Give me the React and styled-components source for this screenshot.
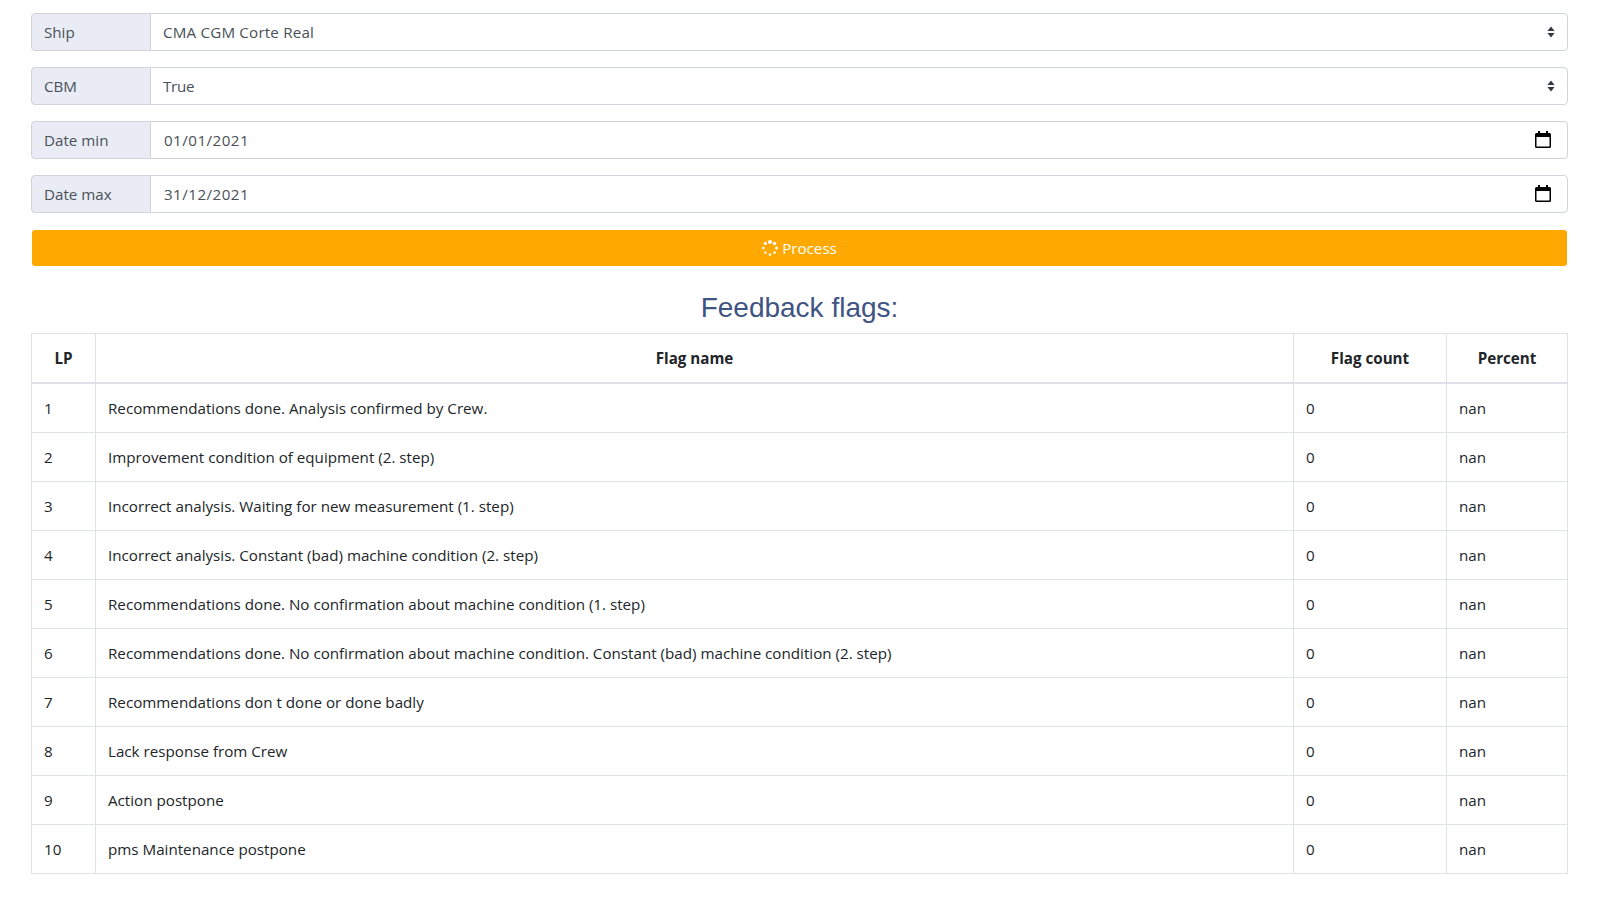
import styled, { createGlobalStyle } from "styled-components";

const GlobalStyle = createGlobalStyle`
  * {
    box-sizing: border-box;
  }
  body {
    margin: 0;
    background: #fff;
    color: #212529;
    font-family: "Open Sans", "Noto Sans", Arial, sans-serif;
    font-size: 15.18px;
    line-height: 24px;
  }
`;

const Page = styled.div`
  padding: 13px 43px 28px 31px;
  display: flex;
  flex-direction: column;
`;

const Field = styled.div`
  display: flex;
  height: 38px;
  margin-bottom: 16px;
`;

const FieldLabel = styled.div`
  width: 120px;
  padding: 0 12px;
  display: flex;
  align-items: center;
  color: #495057;
  background: #e9ecf5;
  border: 1px solid #ced4da;
  border-radius: 4px 0 0 4px;
`;

const FieldValue = styled.div`
  flex: 1;
  margin-left: -1px;
  padding: 0 11px 0 ${(p) => (p.$date ? "13px" : "12px")};
  display: flex;
  align-items: center;
  justify-content: space-between;
  color: #495057;
  border: 1px solid #ced4da;
  border-radius: 0 4px 4px 0;
  letter-spacing: ${(p) => p.$track || "0"};
`;

const ProcessButton = styled.button`
  height: 36px;
  margin: 1px 1px 0;
  border: none;
  border-radius: 3px;
  background: #ffa800;
  color: #fff;
  font: inherit;
  display: flex;
  align-items: center;
  justify-content: center;
  gap: 4px;
`;

const Heading = styled.h2`
  margin: 25px 0 8px;
  text-align: center;
  font-family: "Liberation Sans", Arial, sans-serif;
  font-size: 28px;
  font-weight: 400;
  line-height: 34px;
  color: #3f5482;
`;

const Table = styled.table`
  width: 100%;
  table-layout: fixed;
  border-collapse: collapse;
`;

const HeadCell = styled.th`
  height: 49px;
  padding: 12px 12px 11px;
  text-align: center;
  font-weight: 700;
  border: 1px solid #dee2e6;
  border-bottom-width: 2px;
`;

const Cell = styled.td`
  height: 49px;
  padding: 12px;
  border: 1px solid #dee2e6;
`;

const LpCol = styled.col`
  width: 64px;
`;

const CountCol = styled.col`
  width: 153px;
`;

const PercentCol = styled.col`
  width: 121px;
`;

const CalendarSvg = styled.svg`
  width: 16px;
  height: 17px;
  margin: 0 5px 2px 0;
`;

const flags = [
  "Recommendations done. Analysis confirmed by Crew.",
  "Improvement condition of equipment (2. step)",
  "Incorrect analysis. Waiting for new measurement (1. step)",
  "Incorrect analysis. Constant (bad) machine condition (2. step)",
  "Recommendations done. No confirmation about machine condition (1. step)",
  "Recommendations done. No confirmation about machine condition. Constant (bad) machine condition (2. step)",
  "Recommendations don t done or done badly",
  "Lack response from Crew",
  "Action postpone",
  "pms Maintenance postpone",
];

const SelectArrows = () => (
  <svg width="10" height="12" viewBox="0 0 10 12" fill="#343a40">
    <path d="M5 0.5 8.6 5H1.4zM5 11.5 1.4 7h7.2z" />
  </svg>
);

const CalendarIcon = () => (
  <CalendarSvg viewBox="0 0 16 17">
    <path fill="#000" d="M3 0h2v2h6V0h2v2h1.500A1.500 1.500 0 0 1 16 3.500v12a1.500 1.500 0 0 1-1.500 1.500h-13A1.500 1.500 0 0 1 0 15.500v-12A1.500 1.500 0 0 1 1.500 2H3zM1.500 6v9.500h13V6z" />
  </CalendarSvg>
);

const Spinner = () => (
  <svg width="16" height="16" viewBox="0 0 16 16" fill="#fff">
    <circle cx="8" cy="2" r="2" />
    <circle cx="12.500" cy="3.500" r="1.700" />
    <circle cx="14.500" cy="8" r="1.500" />
    <circle cx="12.600" cy="12.600" r="1.300" />
    <circle cx="8" cy="14.600" r="1.300" />
    <circle cx="3.400" cy="12.600" r="1.200" />
    <circle cx="1.400" cy="8" r="1.200" />
    <circle cx="3.400" cy="3.400" r="1.600" />
  </svg>
);

export default function App() {
  return (
    <Page>
      <GlobalStyle />
      <Field>
        <FieldLabel>Ship</FieldLabel>
        <FieldValue $track="0.18px">
          CMA CGM Corte Real
          <SelectArrows />
        </FieldValue>
      </Field>
      <Field>
        <FieldLabel>CBM</FieldLabel>
        <FieldValue $track="-0.3px">
          True
          <SelectArrows />
        </FieldValue>
      </Field>
      <Field>
        <FieldLabel>Date min</FieldLabel>
        <FieldValue $date $track="0.45px">
          01/01/2021
          <CalendarIcon />
        </FieldValue>
      </Field>
      <Field>
        <FieldLabel>Date max</FieldLabel>
        <FieldValue $date $track="0.45px">
          31/12/2021
          <CalendarIcon />
        </FieldValue>
      </Field>
      <ProcessButton>
        <Spinner />
        Process
      </ProcessButton>
      <Heading>Feedback flags:</Heading>
      <Table>
        <colgroup>
          <LpCol />
          <col />
          <CountCol />
          <PercentCol />
        </colgroup>
        <thead>
          <tr>
            <HeadCell>LP</HeadCell>
            <HeadCell>Flag name</HeadCell>
            <HeadCell>Flag count</HeadCell>
            <HeadCell>Percent</HeadCell>
          </tr>
        </thead>
        <tbody>
          {flags.map((name, i) => (
            <tr key={name}>
              <Cell>{i + 1}</Cell>
              <Cell>{name}</Cell>
              <Cell>0</Cell>
              <Cell>nan</Cell>
            </tr>
          ))}
        </tbody>
      </Table>
    </Page>
  );
}
